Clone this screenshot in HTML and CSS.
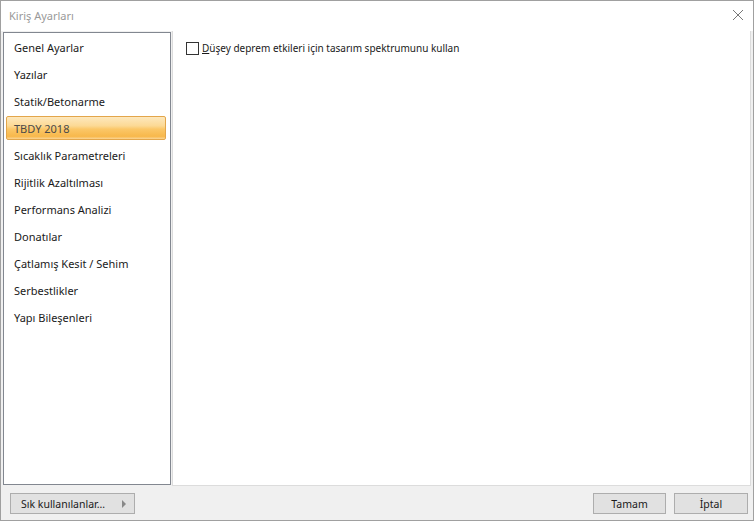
FILE: index.html
```html
<!DOCTYPE html>
<html lang="tr">
<head>
    <meta charset="UTF-8">
    <title>Kiriş Ayarları</title>
    <link rel="stylesheet" href="styles.css">
</head>
<body>
    <div class="window">
        <!-- Title bar -->
        <div class="titlebar">
            <span class="title">Kiriş Ayarları</span>
            <svg class="close" width="12" height="12" viewBox="0 0 12 12">
                <path d="M1 1 L11 11 M11 1 L1 11" stroke="#777" stroke-width="1" fill="none"/>
            </svg>
        </div>

        <div class="main">
            <!-- Category list -->
            <ul class="categories">
                <li class="item">Genel Ayarlar</li>
                <li class="item">Yazılar</li>
                <li class="item">Statik/Betonarme</li>
                <li class="item selected">TBDY 2018</li>
                <li class="item">Sıcaklık Parametreleri</li>
                <li class="item">Rijitlik Azaltılması</li>
                <li class="item">Performans Analizi</li>
                <li class="item">Donatılar</li>
                <li class="item">Çatlamış Kesit / Sehim</li>
                <li class="item">Serbestlikler</li>
                <li class="item">Yapı Bileşenleri</li>
            </ul>

            <!-- Settings page -->
            <div class="page">
                <label class="check">
                    <span class="box"></span>
                    <span><u>D</u>üşey deprem etkileri için tasarım spektrumunu kullan</span>
                </label>
            </div>
        </div>

        <div class="footer">
            <button class="btn btn-menu">Sık kullanılanlar…<span class="arrow"></span></button>
            <div class="actions">
                <button class="btn btn-ok">Tamam</button>
                <button class="btn btn-cancel">İptal</button>
            </div>
        </div>
    </div>
</body>
</html>
```

FILE: styles.css
```css
* {
    box-sizing: border-box;
}
body {
    margin: 0;
    font-family: "Noto Sans", "Open Sans", sans-serif;
    font-size: 11px;
    color: #1a1a1a;
}
.window {
    width: 754px;
    height: 521px;
    border: 1px solid #a0a0a0;
    background: #f0f0f0;
    display: flex;
    flex-direction: column;
}
.titlebar {
    height: 30px;
    background: #fff;
    display: flex;
    align-items: center;
    justify-content: space-between;
    padding: 0 9px 0 8px;
}
.title {
    color: #999;
    font-size: 11px;
    margin-top: -1px;
}
.close {
    margin-top: -2px;
}
.main {
    flex: 1;
    display: flex;
    gap: 1px;
    padding: 0 2px 0 2px;
}
.categories {
    list-style: none;
    margin: 1px 0 1px 0;
    padding: 2px 0 0 2px;
    width: 168px;
    background: #fff;
    border: 1px solid #828790;
}
.item {
    height: 24px;
    line-height: 23px;
    margin-bottom: 3px;
    padding-left: 7px;
    width: 160px;
    border: 1px solid transparent;
    border-radius: 2px;
}
.item.selected {
    color: #4a4a4a;
    border-color: #e3a64a;
    background: linear-gradient(#fde8bd 0%, #fcd995 40%, #fbc768 55%, #f8b84b 88%, #fbd594 100%);
}
.page {
    flex: 1;
    background: #fff;
    border: 1px solid #dcdcdc;
    border-top: none;
    padding: 10px 0 0 13px;
}
.check {
    display: flex;
    align-items: center;
    gap: 3px;
    font-size: 10px;
}
.box {
    width: 13px;
    height: 13px;
    border: 1px solid #333;
    background: #fff;
}
.footer {
    height: 34px;
    display: flex;
    justify-content: space-between;
    padding: 7px 5px 0 9px;
}
.actions {
    display: flex;
    gap: 8px;
}
.btn {
    height: 21px;
    font-family: inherit;
    font-size: 10.5px;
    color: #1a1a1a;
    background: #e1e1e1;
    border: 1px solid #adadad;
    padding: 0;
}
.btn-menu {
    width: 125px;
    text-align: left;
    padding-left: 10px;
    position: relative;
}
.arrow {
    position: absolute;
    right: 8px;
    top: 6px;
    border-left: 4px solid #888;
    border-top: 4px solid transparent;
    border-bottom: 4px solid transparent;
}
.btn-ok {
    width: 73px;
}
.btn-cancel {
    width: 74px;
}
```
